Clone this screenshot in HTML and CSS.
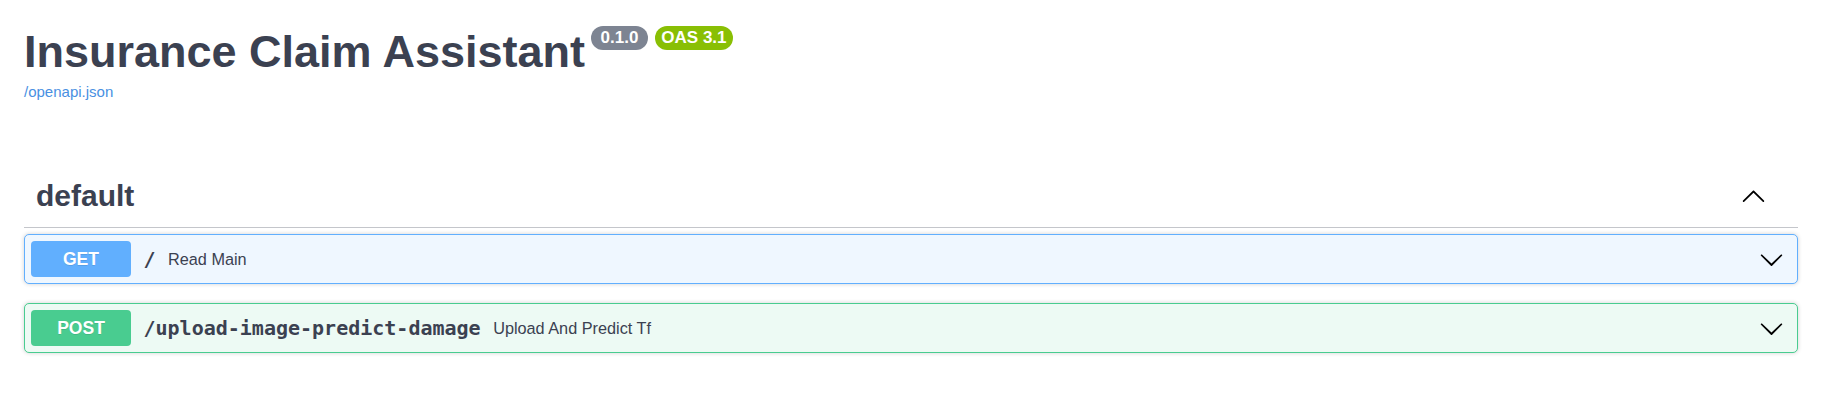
FILE: index.html
```html
<!DOCTYPE html>
<html lang="en">
<head>
<meta charset="utf-8">
<title>Insurance Claim Assistant - Swagger UI</title>
<link rel="stylesheet" href="styles.css">
</head>
<body>
<div class="wrapper">
  <section class="info">
    <div class="title-row">
      <h2 class="title">Insurance Claim Assistant</h2>
      <span class="badge badge-version">0.1.0</span>
      <span class="badge badge-oas">OAS 3.1</span>
    </div>
    <a class="spec-link" href="#">/openapi.json</a>
  </section>

  <section class="tag-section">
    <h3 class="tag-header">
      <span class="tag-name">default</span>
      <span class="tag-arrow">
        <svg viewBox="0 0 20 20" width="25" height="25"><path d="M17.418 14.908c.272.268.709.268.979 0s.271-.701 0-.969l-7.908-7.83c-.27-.268-.707-.268-.979 0l-7.908 7.830c-.27.268-.27.701 0 .969.271.268.709.268.979 0L10 7.767l7.418 7.141z"/></svg>
      </span>
    </h3>

    <div class="opblock opblock-get">
      <div class="opblock-summary">
        <span class="method">GET</span>
        <span class="path">/</span>
        <span class="summary">Read Main</span>
        <span class="op-arrow">
          <svg viewBox="0 0 20 20" width="25" height="25"><path d="M17.418 6.109c.272-.268.709-.268.979 0s.271.701 0 .969l-7.908 7.83c-.27.268-.707.268-.979 0l-7.908-7.83c-.27-.268-.27-.701 0-.969.271-.268.709-.268.979 0L10 13.25l7.418-7.141z"/></svg>
        </span>
      </div>
    </div>

    <div class="opblock opblock-post">
      <div class="opblock-summary">
        <span class="method">POST</span>
        <span class="path">/upload-image-predict-damage</span>
        <span class="summary">Upload And Predict Tf</span>
        <span class="op-arrow">
          <svg viewBox="0 0 20 20" width="25" height="25"><path d="M17.418 6.109c.272-.268.709-.268.979 0s.271.701 0 .969l-7.908 7.83c-.27.268-.707.268-.979 0l-7.908-7.830c-.27-.268-.27-.701 0-.969.271-.268.709-.268.979 0L10 13.25l7.418-7.141z"/></svg>
        </span>
      </div>
    </div>
  </section>
</div>
</body>
</html>
```

FILE: styles.css
```css
html, body {
  margin: 0;
  padding: 0;
  background: #ffffff;
}

body {
  font-family: "Liberation Sans", Arial, sans-serif;
  color: #3b4151;
}

.wrapper {
  padding: 26px 24px 0 24px;
}

.info {
  margin-bottom: 63px;
}

.title-row {
  display: flex;
  align-items: flex-start;
}

.title {
  margin: 0;
  font-size: 45px;
  line-height: 52px;
  font-weight: 700;
  color: #3b4151;
}

.badge {
  display: inline-block;
  margin-top: 0;
  height: 24px;
  line-height: 24px;
  border-radius: 71px;
  color: #ffffff;
  font-size: 17px;
  font-weight: 700;
}

.badge-version {
  margin-left: 5.5px;
  padding: 0 10px;
  background: #7d8492;
}

.badge-oas {
  margin-left: 7px;
  padding: 0 6px;
  background: #89bf04;
}

.spec-link {
  display: block;
  margin-top: 5px;
  font-size: 15px;
  line-height: 18px;
  color: #4990e2;
  text-decoration: none;
}

.tag-header {
  display: flex;
  align-items: center;
  min-height: 39px;
  margin: 0 0 6px 0;
  padding: 12px 32px 12px 12px;
  border-bottom: 1px solid #c4c6cb;
  font-size: 30px;
  font-weight: 700;
  color: #3b4151;
}

.tag-name {
  flex: 1;
}

.tag-arrow {
  display: flex;
  width: 25px;
  height: 25px;
}

.tag-arrow svg,
.op-arrow svg {
  fill: #000000;
}

.opblock {
  margin-bottom: 19px;
  border: 1px solid;
  border-radius: 5px;
  box-shadow: 0 0 4px rgba(0, 0, 0, 0.19);
}

.opblock-get {
  border-color: #61affe;
  background: #eff7ff;
}

.opblock-post {
  border-color: #49cc90;
  background: #edfaf4;
}

.opblock-summary {
  display: flex;
  align-items: center;
  padding: 6px;
}

.method {
  min-width: 100px;
  padding: 7.5px 0;
  line-height: 21px;
  border-radius: 4px;
  color: #ffffff;
  font-size: 17.5px;
  font-weight: 700;
  text-align: center;
  text-shadow: 0 1px 0 rgba(0, 0, 0, 0.1);
}

.opblock-get .method {
  background: #61affe;
}

.opblock-post .method {
  background: #49cc90;
}

.path {
  padding: 0 12.5px;
  font-family: "DejaVu Sans Mono", monospace;
  font-size: 20px;
  font-weight: 700;
  color: #3b4151;
}

.summary {
  flex: 1;
  font-size: 16.25px;
  color: #3b4151;
}

.op-arrow {
  display: flex;
  width: 25px;
  height: 25px;
  margin-right: 7px;
}
```
